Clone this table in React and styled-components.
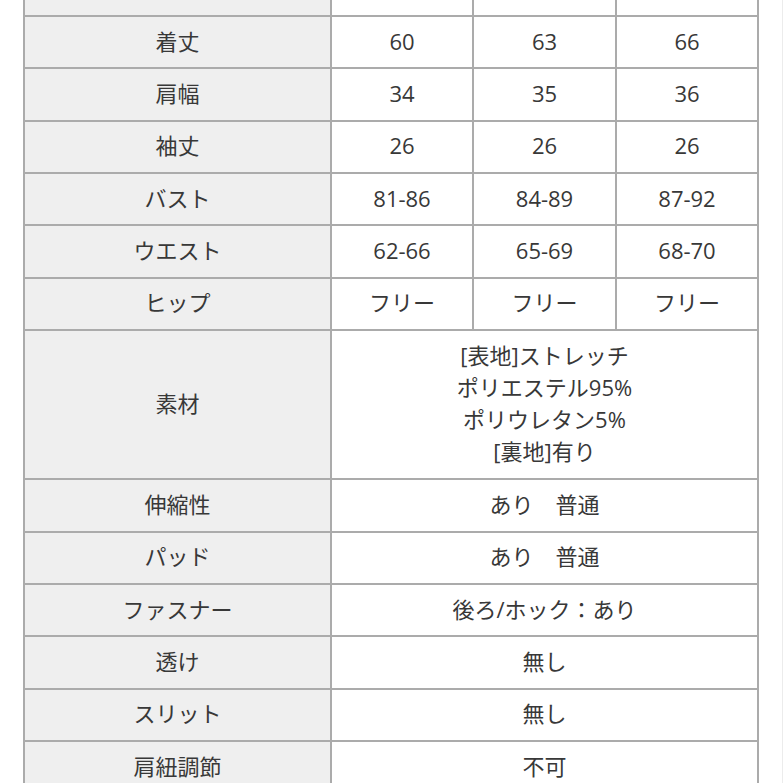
import React from "react";
import styled, { createGlobalStyle } from "styled-components";

const Global = createGlobalStyle`
  html, body {
    margin: 0;
    padding: 0;
    background: #ffffff;
    overflow: hidden;
  }
  body {
    font-family: "Open Sans", "Noto Sans CJK JP", sans-serif;
    color: #363636;
  }
`;

const Page = styled.div`
  width: 783px;
  height: 783px;
  box-sizing: border-box;
  border-right: 1px solid #ececec;
  overflow: hidden;
  padding-left: 23px;
`;

const Table = styled.div`
  width: 736px;
  box-sizing: border-box;
  margin-top: -37.33px;
  border-right: 2px solid #ababab;
  border-bottom: 2px solid #ababab;
  display: flex;
  flex-direction: column;
`;

const Row = styled.div`
  display: grid;
  grid-template-columns: 307px 142px 143px 142px;
  height: ${(p) => p.$h || 52.33}px;
  box-sizing: border-box;
  border-top: 2px solid #ababab;
  flex-shrink: 0;
`;

const Cell = styled.div`
  grid-column: ${(p) => (p.$span ? `span ${p.$span}` : "auto")};
  border-left: 2px solid #ababab;
  background: ${(p) => (p.$head ? "#efefef" : "#ffffff")};
  display: flex;
  flex-direction: column;
  align-items: center;
  justify-content: center;
  padding-bottom: 3px;
  box-sizing: border-box;
  text-align: center;
  font-size: 22px;
  line-height: 32px;
  font-family: "Open Sans", "Noto Sans CJK JP", sans-serif;
  color: #383838;
  white-space: pre;
`;

const HeaderCell = styled(Cell)`
  color: #c8c8c8;
  justify-content: flex-end;
  padding-bottom: 10px;
`;

const sizeRows = [
  ["着丈", "60", "63", "66"],
  ["肩幅", "34", "35", "36"],
  ["袖丈", "26", "26", "26"],
  ["バスト", "81-86", "84-89", "87-92"],
  ["ウエスト", "62-66", "65-69", "68-70"],
  ["ヒップ", "フリー", "フリー", "フリー"],
];

const spanRows = [
  ["伸縮性", "あり　普通"],
  ["パッド", "あり　普通"],
  ["ファスナー", "後ろ/ホック：あり"],
  ["透け", "無し"],
  ["スリット", "無し"],
  ["肩紐調節", "不可"],
];

const material = ["[表地]ストレッチ", "ポリエステル95%", "ポリウレタン5%", "[裏地]有り"];

export default function App() {
  return (
    <>
      <Global />
      <Page>
        <Table>
          <Row>
            <HeaderCell $head>サイズ</HeaderCell>
            <HeaderCell>S</HeaderCell>
            <HeaderCell>M</HeaderCell>
            <HeaderCell>L</HeaderCell>
          </Row>
          {sizeRows.map((r) => (
            <Row key={r[0]}>
              <Cell $head>{r[0]}</Cell>
              <Cell>{r[1]}</Cell>
              <Cell>{r[2]}</Cell>
              <Cell>{r[3]}</Cell>
            </Row>
          ))}
          <Row $h={149.33}>
            <Cell $head>素材</Cell>
            <Cell $span={3}>
              {material.map((m) => (
                <span key={m}>{m}</span>
              ))}
            </Cell>
          </Row>
          {spanRows.map((r) => (
            <Row key={r[0]}>
              <Cell $head>{r[0]}</Cell>
              <Cell $span={3}>{r[1]}</Cell>
            </Row>
          ))}
        </Table>
      </Page>
    </>
  );
}
